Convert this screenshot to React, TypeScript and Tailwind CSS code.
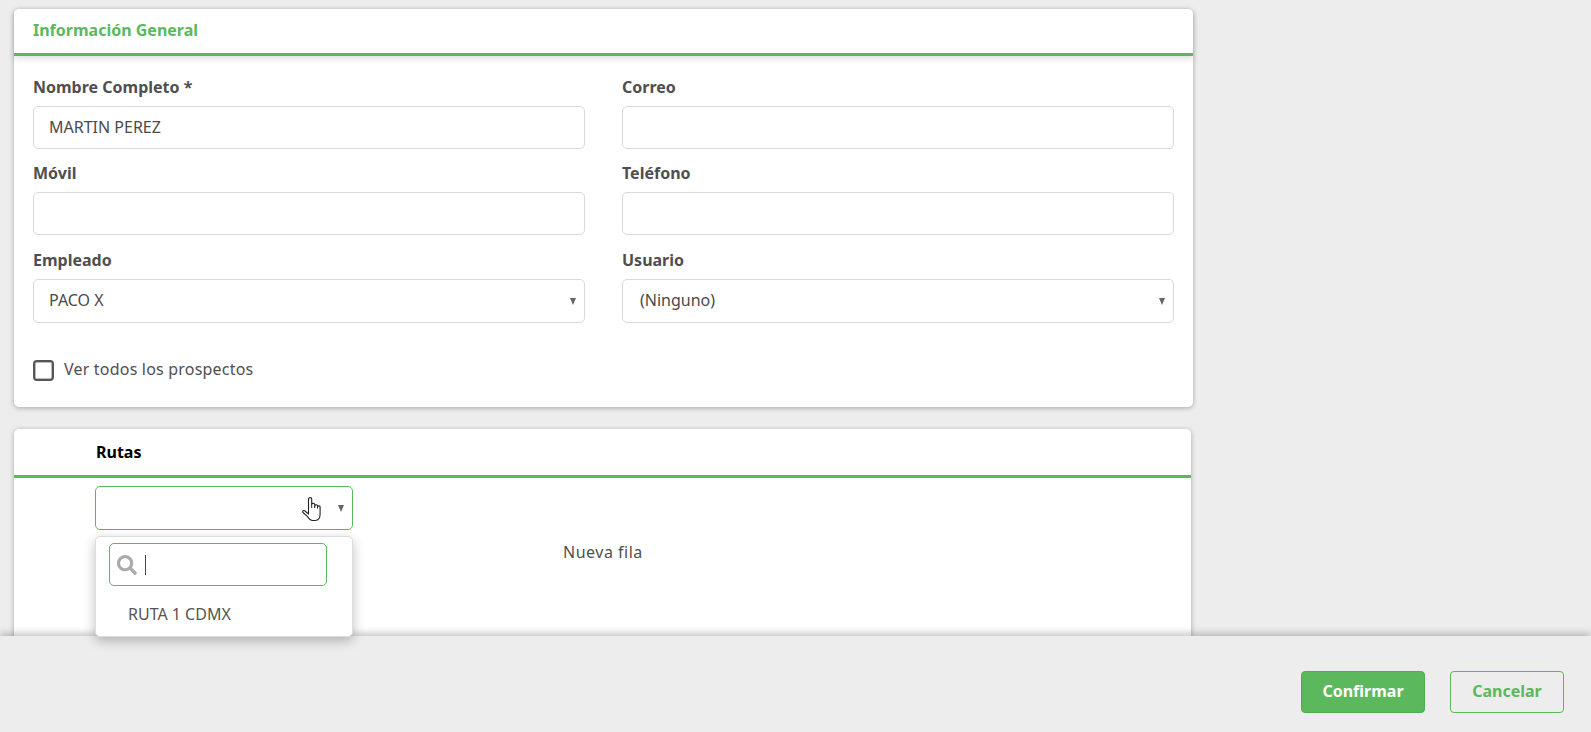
import type { ReactNode } from 'react';
import { FaSearch } from 'react-icons/fa';

const inputClass = 'h-[43px] w-full rounded-[5px] border border-[#d9d9d9] bg-white px-[15px] text-[16px] leading-[41px] text-[#4a4a4a]';

function Caret() {
  return (
    <svg width="6" height="7" viewBox="0 0 6 7" className="mt-[2px] fill-[#666666]">
      <polygon points="0,0 6,0 3,7" />
    </svg>
  );
}

// mouse pointer sitting over the select
function HandCursor({ className }: { className?: string }) {
  return (
    <svg width="19" height="25" viewBox="0 0 19 25" className={className} fill="none">
      <path
        d="M6.5 15V2.2a1.6 1.6 0 0 1 3.2 0V7.5a1.5 1.5 0 0 1 3 .6V9a1.4 1.4 0 0 1 2.8.3V10a1.3 1.3 0 0 1 2.6.4V17c0 4-2 6.5-5 6.5h-2.5c-2.3 0-3.6-1.5-5-3.8L1 15.5c-.9-1.5.8-2.6 2-1.5l3.5 3z"
        fill="#ffffff"
        stroke="#222222"
        strokeWidth="1.1"
        strokeLinejoin="round"
      />
      <path d="M9.7 7.5V11M12.7 8.5V11M15.5 9.5V11.5" stroke="#222222" strokeWidth="1" />
    </svg>
  );
}

function Field({ label, value, select, className }: { label: string; value?: ReactNode; select?: boolean; className?: string }) {
  return (
    <div className={className}>
      <div className="mb-[7px] h-[24px] text-[16px] font-bold leading-[24px] text-[#4f4f4f]">{label}</div>
      <div className={`${inputClass} ${select ? 'flex h-[44px] items-center justify-between pb-[2px] pr-[8px]' : ''}`}>
        <span>{value}</span>
        {select && <Caret />}
      </div>
    </div>
  );
}

export default function App() {
  return (
    <div className="flex h-[732px] w-full flex-col overflow-hidden bg-[#ededed] font-['Noto_Sans',sans-serif]">
      <main className="min-h-0 flex-1 pl-[14px] pt-[9px]">
        {/* Información General */}
        <section className="w-[1179px] rounded-[5px] bg-white shadow-[0_1px_5px_rgba(0,0,0,0.3)]">
          <div className="h-[47px] border-b-[3px] border-[#5cb85c] pl-[19px] text-[16px] font-bold leading-[42px] text-[#5cb85c] shadow-[0_3px_6px_rgba(0,0,0,0.12)]">
            Información General
          </div>
          <div className="px-[19px] pb-[25px] pt-[19px]">
            <div className="grid grid-cols-[552px_552px] gap-x-[37px]">
              <Field label="Nombre Completo *" value="MARTIN PEREZ" />
              <Field label="Correo" />
              <Field label="Móvil" className="mt-[12px]" />
              <Field label="Teléfono" className="mt-[12px]" />
              <Field label="Empleado" value="PACO X" select className="mt-[13px]" />
              <Field label="Usuario" value={<span className="ml-[2px]">(Ninguno)</span>} select className="mt-[13px]" />
            </div>
            <label className="mt-[35px] flex h-[24px] items-center gap-[10px] text-[16px] tracking-[0.2px] text-[#4f4f4f]">
              <span className="h-[21px] w-[21px] rounded-[4px] border-2 border-[#555555] bg-white shadow-[inset_0_0_0_1px_rgba(85,85,85,0.4)]" />
              <span className="pb-[2px]">Ver todos los prospectos</span>
            </label>
          </div>
        </section>

        {/* Rutas */}
        <section className="mt-[22px] h-[400px] w-[1177px] rounded-[5px] bg-white shadow-[0_1px_5px_rgba(0,0,0,0.3)]">
          <div className="h-[49px] border-b-[3px] border-[#5cb85c] pl-[82px] text-[16px] font-bold leading-[46px] text-black">
            Rutas
          </div>
          <div className="pl-[81px] pt-[8px]">
            <div className="relative w-[258px]">
              <div className="flex h-[44px] items-center justify-end rounded-[5px] border border-[#5cb85c] bg-white pb-[2px] pr-[8px]">
                <Caret />
              </div>
              <HandCursor className="absolute left-[207px] top-[11px]" />
              <div className="absolute left-[0px] top-[50px] z-10 h-[101px] w-[258px] rounded-[5px] border border-[#dddddd] bg-white shadow-[0_4px_12px_rgba(0,0,0,0.25)]">
                <div className="ml-[13px] mt-[6px] flex h-[43px] w-[218px] items-center rounded-[5px] border border-[#5cb85c] pl-[7px]">
                  <FaSearch className="text-[20px] text-[#aaaaaa]" />
                  <span className="ml-[8px] h-[20px] w-px bg-[#444444]" />
                </div>
                <div className="mt-[16px] pl-[32px] text-[16px] leading-[24px] text-[#555555]">RUTA 1 CDMX</div>
              </div>
            </div>
            <div className="mt-[10px] pl-[468px] text-[16px] leading-[24px] tracking-[0.5px] text-[#4f4f4f]">Nueva fila</div>
          </div>
        </section>
      </main>

      <footer className="relative flex h-[96px] shrink-0 items-start justify-end gap-[25px] bg-[#ededed] pr-[27px] pt-[35px] shadow-[0_-3px_7px_rgba(0,0,0,0.22)]">
        <button className="h-[42px] w-[124px] rounded-[4px] border border-[#4cae4c] bg-[#5cb85c] pb-[2px] text-[16px] font-bold text-white">Confirmar</button>
        <button className="h-[42px] w-[114px] rounded-[4px] border border-[#5cb85c] pb-[2px] text-[16px] font-bold text-[#5cb85c]">Cancelar</button>
      </footer>
    </div>
  );
}
